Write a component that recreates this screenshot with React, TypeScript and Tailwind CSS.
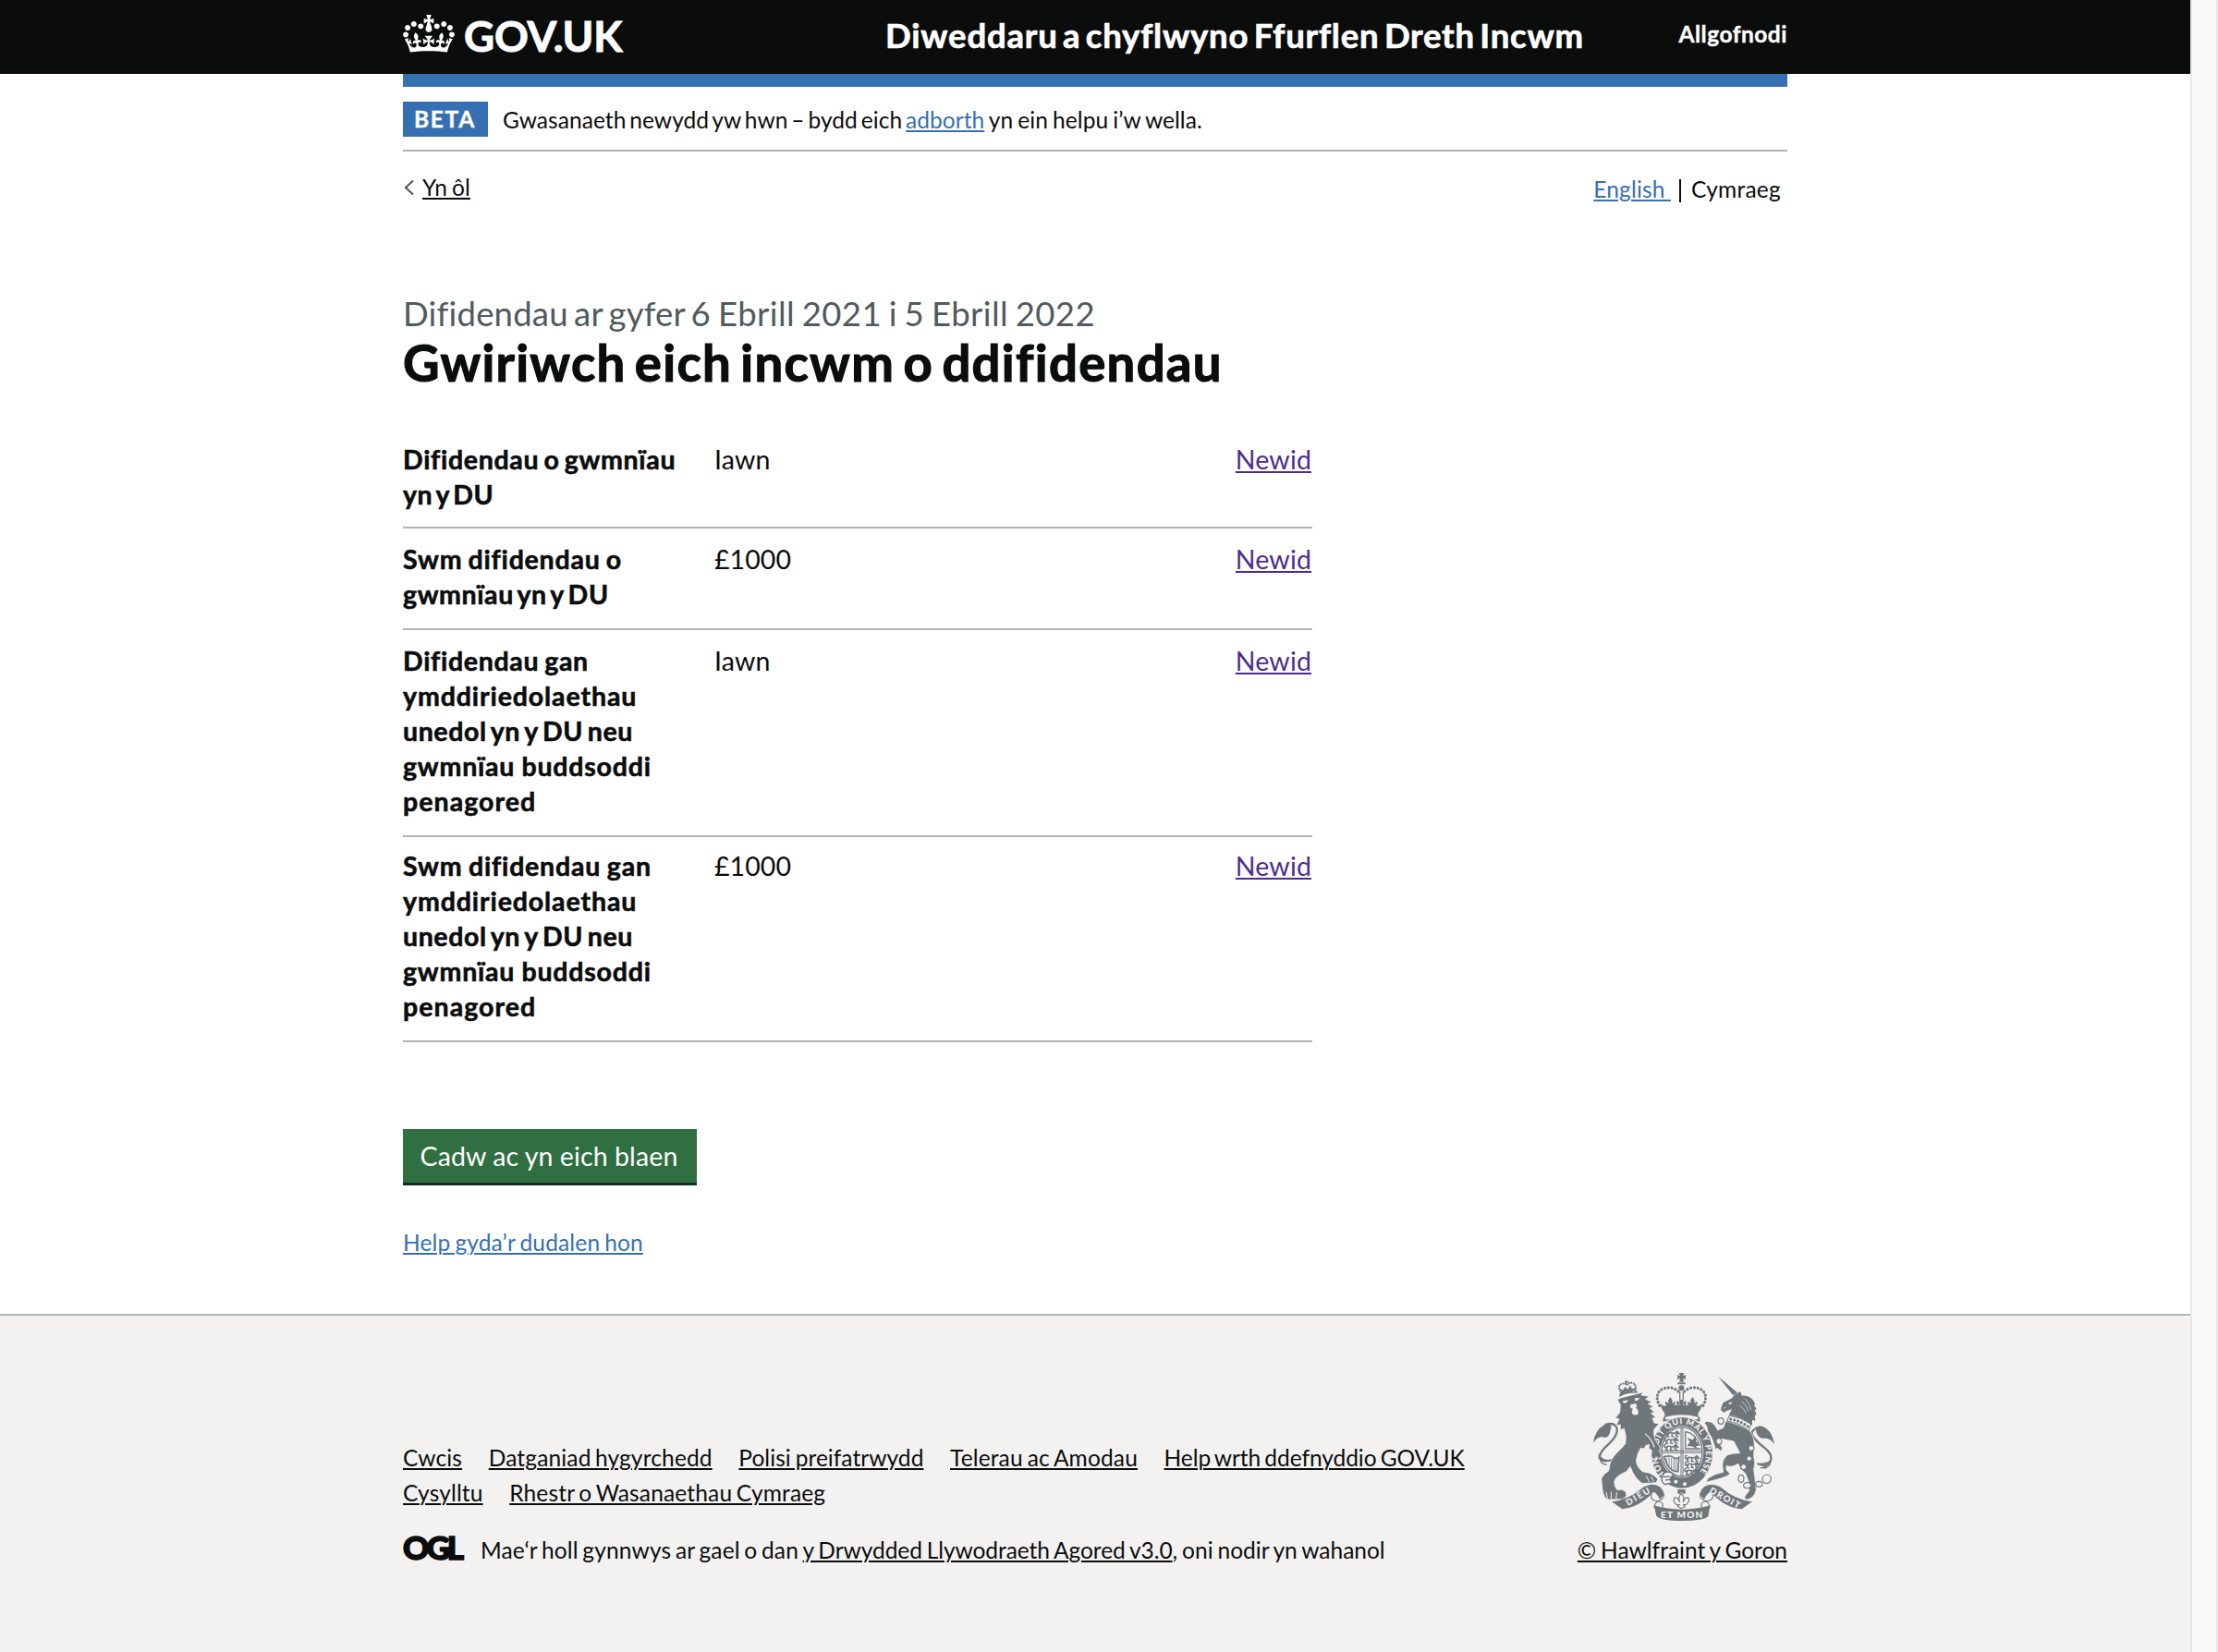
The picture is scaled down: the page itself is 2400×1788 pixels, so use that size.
import type { ReactNode } from "react";

const link = "underline decoration-2 underline-offset-[2px]";

function Crown() {
  return (
    <svg viewBox="0 0 132 97" className="mt-4 h-[41px] w-14 shrink-0" aria-hidden="true">
      <path
        fill="currentColor"
        fillRule="evenodd"
        d="M25 30.2c3.5 1.5 7.7-.2 9.1-3.7 1.5-3.6-.2-7.8-3.9-9.2-3.6-1.4-7.6.3-9.1 3.9-1.4 3.5.3 7.5 3.9 9zM9 39.5c3.6 1.5 7.8-.2 9.2-3.7 1.5-3.6-.2-7.8-3.9-9.1-3.6-1.5-7.6.2-9.1 3.8-1.4 3.5.3 7.5 3.8 9zM4.4 57.2c3.5 1.5 7.7-.2 9.1-3.8 1.5-3.6-.2-7.7-3.9-9.1-3.5-1.5-7.6.3-9.1 3.8-1.4 3.5.3 7.6 3.9 9.1zm38.3-21.4c3.5 1.5 7.7-.2 9.1-3.8 1.5-3.6-.2-7.7-3.9-9.1-3.6-1.5-7.6.3-9.1 3.8-1.3 3.6.4 7.7 3.9 9.1zm64.4-5.6c-3.6 1.5-7.8-.2-9.1-3.7-1.5-3.6.2-7.8 3.8-9.2 3.6-1.4 7.7.3 9.2 3.9 1.3 3.5-.4 7.5-3.9 9zm15.9 9.3c-3.6 1.5-7.7-.2-9.1-3.7-1.5-3.6.2-7.8 3.7-9.1 3.6-1.5 7.7.2 9.2 3.8 1.5 3.5-.3 7.5-3.8 9zm4.7 17.7c-3.6 1.5-7.8-.2-9.2-3.8-1.5-3.6.2-7.7 3.9-9.1 3.6-1.5 7.7.3 9.2 3.8 1.3 3.5-.4 7.6-3.9 9.1zM89.3 35.8c-3.6 1.5-7.8-.2-9.2-3.8-1.4-3.6.2-7.7 3.9-9.1 3.6-1.5 7.7.3 9.2 3.8 1.4 3.6-.3 7.7-3.9 9.1zM69.7 17.7l8.9 4.7V9.3l-8.9 2.8c-.2-.3-.5-.6-.9-.9L72.4 0H59.6l3.5 11.2c-.3.3-.6.5-.9.9l-8.8-2.8v13.1l8.8-4.7c.3.3.6.7.9.9l-5 15.4v.1c-.2.8-.4 1.6-.4 2.4 0 4.1 3.1 7.5 7 8.1h.2c.3 0 .7.1 1 .1.4 0 .7 0 1-.1h.2c4-.6 7.1-4.1 7.1-8.1 0-.8-.1-1.7-.4-2.4V34l-5.1-15.4c.4-.2.7-.6 1-.9zM66 92.8c16.9 0 32.8 1.1 47.1 3.2 4-16.9 8.9-26.7 14-33.5l-9.6-3.4c1 4.9 1.1 7.2 0 10.2-1.5-1.4-3-4.3-4.2-8.7L108.6 76c2.8-2 5-3.2 7.5-3.3-4.4 9.4-10 11.9-13.6 11.2-4.3-.8-6.3-4.6-5.6-7.9 1-4.7 5.7-5.9 8-.5 4.3-8.7-3-11.4-7.6-8.8 7.1-7.2 7.9-13.5 2.1-21.1-8 6.1-8.1 12.3-4.5 20.8-4.7-5.4-12.1-2.5-9.5 6.2 3.4-5.2 7.9-2 7.2 3.1-.6 4.3-6.4 7.8-13.5 7.2-10.3-.9-10.9-8-11.2-13.8 2.5-.5 7.1 1.8 11 7.3L80.2 60c-4.1 4.4-8 5.3-12.3 5.4 1.4-4.4 8-11.6 8-11.6H55.5s6.4 7.2 7.9 11.6c-4.2-.1-8-1-12.3-5.4l1.4 16.4c3.9-5.5 8.5-7.7 10.9-7.3-.3 5.8-.9 12.8-11.1 13.8-7.2.6-12.9-2.9-13.5-7.2-.7-5 3.8-8.3 7.1-3.1 2.7-8.7-4.6-11.6-9.4-6.2 3.7-8.5 3.6-14.7-4.6-20.8-5.8 7.6-5 13.9 2.2 21.1-4.7-2.6-11.9.1-7.7 8.8 2.3-5.5 7.1-4.2 8.1.5.7 3.3-1.3 7.1-5.7 7.9-3.5.7-9-1.8-13.5-11.2 2.5.1 4.7 1.3 7.5 3.3l-4.7-15.4c-1.2 4.4-2.7 7.2-4.3 8.7-1.1-3-.9-5.3 0-10.2l-9.5 3.4c5 6.9 9.9 16.7 14 33.5 14.8-2.1 30.8-3.2 47.7-3.2z"
      />
    </svg>
  );
}

const CREST = "#6f777b";
const PAPER = "#f3f2f1";

function PassantLion({ x, y }: { x: number; y: number }) {
  return (
    <path
      transform={`translate(${x} ${y})`}
      fill="none"
      stroke={CREST}
      strokeWidth="4.5"
      strokeLinecap="round"
      strokeLinejoin="round"
      d="M2 12q-4-8 3-10M5 12q8-6 18-3t14-6l6 4-5 5M10 12l-4 8 6 1M22 12l-1 8 6 1M34 11l2 8 6 1M38 8l8 4"
    />
  );
}

/* Royal coat of arms */
function Crest() {
  return (
    <svg viewBox="24 18 588 480" preserveAspectRatio="none" className="mr-3.5 h-40 w-[196px]" aria-hidden="true">
      {/* imperial crown */}
      <g fill={CREST}>
        <path d="M302 18h17l-4 10 9-4v15l-9-4 3 12h-15l3-12-9 4V24l9 4z" />
        <circle cx="310" cy="67" r="9" />
        <path d="M298 49h25v6h-25z" />
        <g fill="none" stroke={CREST} strokeLinecap="round">
          <path d="M239 124C218 86 244 62 276 66Q290 68 300 78" strokeWidth="9.5" strokeDasharray="0.1 11.5" />
          <path d="M381 124C402 86 376 62 344 66Q330 68 320 78" strokeWidth="9.5" strokeDasharray="0.1 11.5" />
          <path d="M305 80v22M316 80v22" strokeWidth="4" />
        </g>
        <path d="M274 96q10 12 5 20l10-5q5 8-5 12l26-2 26 2q-10-4-5-12l10 5q-5-8 5-20 10 12 5 20l10-5q4 8-4 12l10 2q8-2 12-10-4 20-14 32l-2 14q-53-20-106 0l-2-14q-12-14-14-32 4 8 12 10l10-2q-8-4-4-12l10 5q-5-8 5-20z" />
        <path d="M302 104h17l-5 9 11-5v15l-11-5 4 12h-16l4-12-11 5v-15l11 5z" />
        <path d="M251 176q-4-12 8-20 52-16 104 0 12 8 6 20-58-18-118 0z" />
      </g>
      <path d="M262 165q50-14 98 0" fill="none" stroke={PAPER} strokeWidth="9" strokeLinecap="round" />

      {/* garter and shield */}
      <ellipse cx="312" cy="277" rx="103" ry="118" fill={PAPER} />
      <ellipse cx="312" cy="277" rx="99" ry="115" fill={CREST} />
      <ellipse cx="312" cy="274" rx="70" ry="84" fill={PAPER} />
      <ellipse cx="312" cy="274" rx="66" ry="80" fill="none" stroke={CREST} strokeWidth="4" />
      <path d="M309 196v158M315 196v158M246 271h132M246 277h132" stroke={CREST} strokeWidth="3" />
      <path id="garter" d="M261 351A79 94 0 1 1 366 345" fill="none" />
      <text fill={PAPER} className="font-['Lato',sans-serif] text-[27px] font-black tracking-[0px]">
        <textPath href="#garter" textLength="418" lengthAdjust="spacing">HONI SOIT QUI MAL Y PENSE</textPath>
      </text>
      <g fill={PAPER} stroke={CREST} strokeWidth="4">
        <path d="M254 342q22-8 30 6-18 14-4 26l-24 6q-10-8-10-18z" />
        <path d="M252 356l20-2M258 366l16-2" />
      </g>
      <circle cx="292" cy="371" r="6" fill={PAPER} />
      <circle cx="321" cy="379" r="6" fill={PAPER} />
      <PassantLion x={258} y={204} />
      <PassantLion x={254} y={226} />
      <PassantLion x={254} y={248} />
      <PassantLion x={322} y={284} />
      <PassantLion x={322} y={305} />
      <PassantLion x={320} y={326} />
      <g fill="none" stroke={CREST}>
        <path d="M323 208v56h50M323 208q34 6 46 46" strokeWidth="4" />
        <path d="M332 254l8-12-6-10 14 6 6-10 2 14 10 10-12 2 4 6-14-6z" fill={CREST} strokeWidth="4" />
        <path d="M254 290q20-6 30 2 8 8 18 0l-3 46q-30 2-45-48z" strokeWidth="5" />
        <path d="M262 294v22M270 292v34M278 294v40M286 298v38M293 300v36" strokeWidth="2.5" />
      </g>

      {/* supporting lion */}
      <g fill="none" stroke={CREST}>
        <path d="M62 186Q94 176 101 198Q104 220 78 245Q44 275 44 292Q50 312 92 298" strokeWidth="7" />
        <path d="M42 284q8 16 28 18M46 296q2 18 22 20" strokeWidth="4" />
      </g>
      <path d="M24 246Q28 205 60 186Q90 178 80 202Q76 234 54 226Q38 222 24 246z" fill={CREST} />
      <path
        d="M116 98L160 87 186 80 180 90 206 94 194 103 214 112 202 118 220 128 208 132 223 146 212 149 227 162 216 166 222 180 238 183 222 200Q218 216 226 236L242 262 238 272 246 284 240 298 228 290 222 300 212 288 214 270 204 262 206 250 194 254 190 264 178 262Q166 280 164 300 162 320 184 338L206 343 220 350 234 362 228 374 184 377Q158 362 144 322L132 338Q98 352 93 368 90 384 102 398L116 396 130 404 132 418 118 428 72 429Q58 424 54 398L50 362Q54 348 74 336L78 314Q84 290 112 266L128 248 130 224 124 198 112 204 112 186 98 188 108 168 96 164 110 146 112 122 102 104z"
        fill={CREST}
        stroke={PAPER}
        strokeWidth="2.5"
      />
      <path d="M110 95Q136 80 168 83L166 76Q136 73 108 87zM116 84l-6-16 10 6 8-12 8 10 8-14 6 12 12-4-2 12q-22-4-44 6z" fill={CREST} />
      <path d="M114 82q-14-24 4-29 10-2 16 4 6-10 18-6 16 8 7 24" fill="none" stroke={CREST} strokeWidth="6.5" strokeDasharray="0.1 7.5" strokeLinecap="round" />
      <path d="M131 41v12M126 47h11" stroke={CREST} strokeWidth="4.5" />
      <g fill={PAPER}>
        <path d="M120 109l18-3-6 8-10 2zM160 99l14 0-6 8-9 2zM144 121l18-4 4 8-4 6q10 6 8 20-10 8-20-2-2-8 3-14l-8-4z" />
        <path d="M192 214q22 14 32 44l-3 2q-12-32-30-43z" />
      </g>
      <path d="M66 404l4 22M82 404l0 22M100 406l-2 20M196 352l10 20M212 354l8 16" stroke={PAPER} strokeWidth="3" />

      {/* supporting unicorn */}
      <g fill="none" stroke={CREST}>
        <path d="M568 192Q540 200 538 214Q545 235 585 265Q606 284 600 302Q590 326 556 312" strokeWidth="7" />
        <path d="M602 300q-12 14-34 12M600 306q-4 18-22 22M590 314q-10 14-24 12" strokeWidth="4" />
      </g>
      <g fill={CREST}>
        <path d="M612 250Q604 202 572 191Q546 192 554 212Q562 234 584 230Q600 230 612 250z" />
        <path d="M429 29L492 82 478 91z" />
        <path d="M440 129L446 114 472 101 484 88 502 78 506 92Q530 90 544 108L550 120 546 122 554 136 548 138 554 154 548 156 550 174 540 170 540 188Q500 160 462 158L474 136 458 140 448 147 438 138z" />
        <path
          d="M454 174Q500 184 534 208 550 230 546 262L545 290Q552 310 545 330L548 352 553 398Q546 428 518 430L515 420 530 400Q532 370 518 345 500 330 494 312 480 325 456 320L456 332 468 345 458 353 432 362 390 373 396 360 420 347 446 340 443 318Q444 296 460 284 475 278 500 278L480 240 440 232 434 246 443 262 438 273 428 262 420 266 416 250 408 228 396 208 392 190 384 180 392 175 408 178 420 190 428 204 446 196z"
          stroke={PAPER}
          strokeWidth="2.5"
        />
      </g>
      <path d="M462 116l10-4 2 5-8 3zM445 134l10-3-2-3z" fill={PAPER} />
      <path d="M516 102q16 14 20 36M506 110q18 14 22 32M500 124q14 10 20 24" fill="none" stroke={PAPER} strokeWidth="2" />
      <path d="M460 164q44 6 74 34" fill="none" stroke={PAPER} strokeWidth="20" />
      <path d="M458 174q44 6 70 32l8-22q-32-22-70-28z" fill="none" stroke={CREST} strokeWidth="3" />
      <path d="M470 168q34 6 58 26" fill="none" stroke={CREST} strokeWidth="9" strokeDasharray="0.1 12" strokeLinecap="round" />
      <g fill={PAPER} stroke={CREST} strokeWidth="3.5">
        <ellipse cx="438" cy="174" rx="9" ry="10" />
        <ellipse cx="432" cy="240" rx="9" ry="10" />
        <circle cx="537" cy="262" r="9" />
        <circle cx="530" cy="296" r="8" />
        <circle cx="512" cy="323" r="9" />
        <ellipse cx="504" cy="361" rx="9" ry="12" />
        <ellipse cx="524" cy="383" rx="12" ry="9" />
        <ellipse cx="562" cy="379" rx="11" ry="9" />
        <circle cx="587" cy="362" r="14" />
      </g>

      {/* motto ribbon */}
      <g fill="none" stroke={CREST} strokeWidth="3.5">
        <path d="M214 412Q206 426 222 432Q246 436 250 444Q250 452 246 460" />
        <path d="M252 408Q256 426 240 432Q222 438 222 456" />
        <path d="M410 412Q418 426 402 432Q378 436 374 444Q374 452 378 460" />
        <path d="M372 408Q368 426 384 432Q402 438 402 456" />
      </g>
      <g fill={CREST}>
        <path d="M84 436Q140 430 188 388Q214 374 238 386Q254 398 253 414L240 430Q234 412 220 404Q172 456 118 460z" />
        <path d="M540 436Q484 430 436 388Q410 374 386 386Q370 398 371 414L384 430Q390 412 404 404Q452 456 506 460z" />
        <path d="M221 448Q312 474 403 448L397 484Q384 498 312 498Q240 498 229 482z" />
      </g>
      <g fill={PAPER} className="font-['Lato',sans-serif] font-black tracking-[0px]">
        <text x="243" y="490" textLength="136" className="text-[30px]">ET MON</text>
        <text transform="translate(137 450) rotate(-31)" textLength="86" className="text-[29px]">DIEU</text>
        <text transform="translate(399 406) rotate(29)" textLength="108" className="text-[29px]">DROIT</text>
      </g>
      <path d="M298 396h25v14h-8l-4-4-5 4h-8z" fill={CREST} />
      <path
        d="M310 410q13 12 5 28 8-20 18-14 6 10-8 22h-8l4 6-11 6-11-6 4-6h-8q-14-12-8-22 10-6 18 14-8-16 5-28z"
        fill={PAPER}
        stroke={CREST}
        strokeWidth="3.5"
      />
    </svg>
  );
}

type Row = { label: { text: string; cls: string }[]; value: string; valueCls: string; cls: string };

const trust = [
  { text: "ymddiriedolaethau", cls: "tracking-[0.9px]" },
  { text: "unedol yn y DU neu", cls: "tracking-[0.6px] [word-spacing:-2.7px]" },
  { text: "gwmnïau buddsoddi", cls: "tracking-[0.8px] [word-spacing:-0.5px]" },
  { text: "penagored", cls: "tracking-[1.05px]" },
];

const rows: Row[] = [
  {
    label: [
      { text: "Difidendau o gwmnïau", cls: "tracking-[0.7px] [word-spacing:-2.5px]" },
      { text: "yn y DU", cls: "tracking-[0.4px] [word-spacing:-3.1px]" },
    ],
    value: "Iawn", valueCls: "", cls: "pb-4",
  },
  {
    label: [
      { text: "Swm difidendau o", cls: "tracking-[0.8px] [word-spacing:-1.5px]" },
      { text: "gwmnïau yn y DU", cls: "tracking-[0.6px] [word-spacing:-3.2px]" },
    ],
    value: "£1000", valueCls: "tracking-[0.07px]", cls: "pt-3.5 pb-[18px]",
  },
  {
    label: [{ text: "Difidendau gan", cls: "tracking-[0.7px] [word-spacing:-1.8px]" }, ...trust],
    value: "Iawn", valueCls: "", cls: "pt-3.5 pb-[18px]",
  },
  {
    label: [{ text: "Swm difidendau gan", cls: "tracking-[0.8px] [word-spacing:-1px]" }, ...trust],
    value: "£1000", valueCls: "tracking-[0.07px]", cls: "pt-3 pb-[18px]",
  },
];

function A({ children, className = "" }: { children: ReactNode; className?: string }) {
  return <a href="#" className={`${link} ${className}`}>{children}</a>;
}

const footerLinks = [
  [
    { text: "Cwcis", cls: "" },
    { text: "Datganiad hygyrchedd", cls: "[word-spacing:-2px]" },
    { text: "Polisi preifatrwydd", cls: "tracking-[0.05px] [word-spacing:-1.4px]" },
    { text: "Telerau ac Amodau", cls: "[word-spacing:-1.5px]" },
    { text: "Help wrth ddefnyddio GOV.UK", cls: "tracking-[-0.05px] [word-spacing:-2.1px]" },
  ],
  [
    { text: "Cysylltu", cls: "" },
    { text: "Rhestr o Wasanaethau Cymraeg", cls: "[word-spacing:-1.8px]" },
  ],
];

export default function App() {
  return (
    <div className="flex h-[1788px] w-[2400px] overflow-hidden whitespace-pre bg-white font-['Lato','Liberation_Sans',sans-serif] text-[24.5px] leading-[38px] tracking-[0.15px] text-[#0b0c0c] [font-variant-ligatures:none]">
      <div className="flex w-[2370px] flex-col">
        <header className="h-20 bg-[#0b0c0c] text-white">
          <div className="mx-auto flex h-20 w-[1498px] font-bold">
            <a href="#" className="flex w-[522px]">
              <Crown />
              <span className="ml-2.5 text-[45.6px] leading-[77px] tracking-[-0.2px] [-webkit-text-stroke:1px]">GOV.UK</span>
            </a>
            <a href="#" className="text-[36.5px] leading-[77px] tracking-[0.8px] [-webkit-text-stroke:0.7px] [word-spacing:-4.2px]">
              Diweddaru a chyflwyno Ffurflen Dreth Incwm
            </a>
            <a href="#" className="ml-auto leading-[74px] tracking-[0.5px] [-webkit-text-stroke:0.4px]">Allgofnodi</a>
          </div>
        </header>

        <main className="mx-auto w-[1498px]">
          <div className="h-3.5 bg-[#366fb2]" />
          <div className="flex border-b-2 border-[#b1b4b6] pt-4 pb-3.5">
            <strong className="mr-4 h-[38px] w-[92px] bg-[#366fb2] pl-3 leading-[38px] font-bold tracking-[1.7px] text-white [-webkit-text-stroke:0.4px]">BETA</strong>
            <p className="h-[38px] leading-[39px] tracking-[0.05px] [word-spacing:-2.4px]">
              Gwasanaeth newydd yw hwn – bydd eich <A className="text-[#366fb2]">adborth</A>
              <span className="[word-spacing:-1.2px]"> yn ein helpu i’w wella.</span>
            </p>
          </div>

          <div className="flex h-[55px] items-start leading-[30px]">
            <a href="#" className="mt-6 flex items-start">
              <svg viewBox="0 0 12 18" className="mt-1.5 h-[18px] w-3" fill="none" stroke="#505a5f" strokeWidth="2.2" aria-hidden="true">
                <path d="M11 1.5 3 9l8 7.5" />
              </svg>
              <span className={`ml-[9px] [word-spacing:-1.6px] ${link}`}>Yn ôl</span>
            </a>
            <nav className="mt-[26px] mr-[7px] ml-auto flex">
              <A className="text-[#366fb2]">English </A>
              <span className="mt-1 mr-[11px] ml-[9px] h-[25px] w-0.5 bg-[#0b0c0c]" />
              <span className="tracking-[0.25px]">Cymraeg</span>
            </nav>
          </div>

          <h1 className="mt-[97px]">
            <span className="block text-[36.5px] leading-[46px] tracking-[0.2px] text-[#505a5f]">
              <span className="[word-spacing:-3.2px]">Difidendau ar gyfer </span>
              <span className="tracking-[0.4px] [word-spacing:-2px]">6 Ebrill 2021 i 5 Ebrill 2022</span>
            </span>
            <span className="block text-[54.5px] leading-[60px] font-bold tracking-[1.3px] [-webkit-text-stroke:1.2px] [word-spacing:-5.2px]">
              Gwiriwch eich incwm o ddifidendau
            </span>
          </h1>

          <dl className="mt-14 w-[984px] text-[28.5px]">
            {rows.map((r, i) => (
              <div key={i} className={`flex border-b-2 border-[#b1b4b6] ${r.cls}`}>
                <dt className="w-[337px] font-bold [-webkit-text-stroke:0.6px]">
                  {r.label.map((l) => (
                    <span key={l.text} className={`block ${l.cls}`}>{l.text}</span>
                  ))}
                </dt>
                <dd className={r.valueCls}>{r.value}</dd>
                <dd className="mr-px ml-auto">
                  <A className="text-[#4c2c92]">Newid</A>
                </dd>
              </div>
            ))}
          </dl>

          <button className="mt-[94px] block h-[58px] w-[318px] bg-[#2f6f41] pl-[18.5px] text-left text-[28.5px] leading-[58px] tracking-[0.15px] text-white shadow-[0_3px_0_#12301f] [word-spacing:-0.3px]">
            Cadw ac yn eich blaen
          </button>
          <div className="mt-[50px] leading-[30px] [word-spacing:-1.4px]">
            <A className="text-[#366fb2]">Help gyda’r dudalen hon</A>
          </div>
        </main>

        <footer className="mt-[62px] flex-1 border-t-2 border-[#b1b4b6] bg-[#f3f2f1] pt-[62px]">
          <div className="mx-auto flex w-[1498px] items-end justify-between leading-[39px]">
            <div>
              {footerLinks.map((line, i) => (
                <ul key={i} className="flex h-[38px] gap-[28.6px]">
                  {line.map((l) => (
                    <li key={l.text} className={l.cls}><A>{l.text}</A></li>
                  ))}
                </ul>
              ))}
              <div className="mt-6 flex h-[38px] items-start">
                <span className="w-[84px] text-[35px] leading-[32px] font-black tracking-[-3px] [-webkit-text-stroke:1.6px]">OGL</span>
                <span className="[word-spacing:-1.8px]">
                  Mae‘r holl gynnwys ar gael o dan <A className="tracking-[-0.05px] [word-spacing:-1.45px]">y Drwydded Llywodraeth Agored v3.0</A>
                  <span className="tracking-[0px] [word-spacing:-1.3px]">, oni nodir yn wahanol</span>
                </span>
              </div>
            </div>
            <div className="flex flex-col items-end">
              <Crest />
              <A className="mt-3 h-[38px] tracking-[0px] [word-spacing:-1.4px]">© Hawlfraint y Goron</A>
            </div>
          </div>
        </footer>
      </div>
      <div className="w-[30px] border-x-2 border-[#e8e8e8] bg-[#fafafa]" />
    </div>
  );
}
